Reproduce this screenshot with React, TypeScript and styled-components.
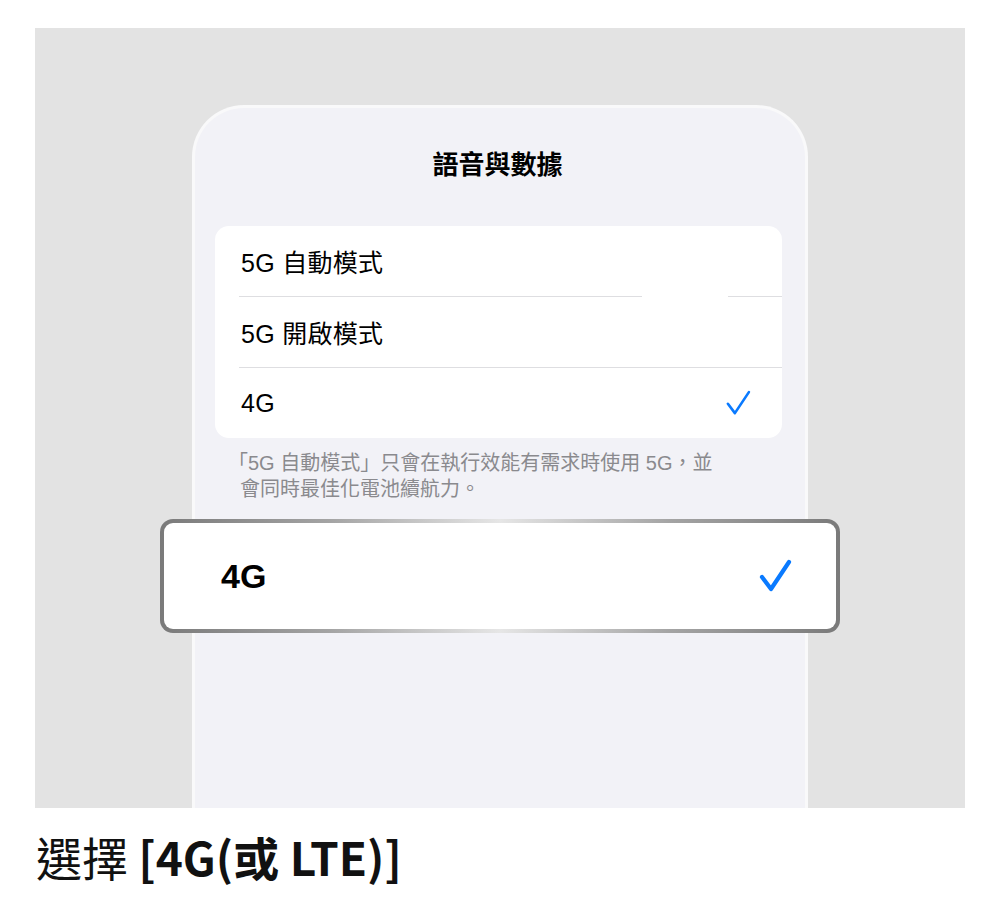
import React from "react";
import styled, { createGlobalStyle } from "styled-components";

const GlobalStyle = createGlobalStyle`
  html, body {
    margin: 0;
    padding: 0;
    background: #ffffff;
  }
  body {
    font-family: "Noto Sans CJK TC", "Noto Sans", sans-serif;
    -webkit-font-smoothing: antialiased;
  }
`;

const Page = styled.div`
  width: 1000px;
  height: 924px;
  background: #ffffff;
  display: flex;
  flex-direction: column;
`;

const Stage = styled.div`
  position: relative;
  margin: 28px 0 0 35px;
  width: 930px;
  height: 780px;
  background: #e3e3e3;
  display: flex;
  justify-content: center;
  padding-top: 77px;
  box-sizing: border-box;
  overflow: hidden;
`;

const Phone = styled.div`
  width: 616px;
  box-sizing: border-box;
  background: #f2f2f7;
  border: 3px solid #f9f9fa;
  border-bottom: none;
  border-radius: 52px 52px 0 0;
  display: flex;
  flex-direction: column;
  padding: 37px 23px 0 20px;
`;

const Title = styled.div`
  font-family: "Noto Sans CJK TC", sans-serif;
  font-weight: 700;
  font-size: 26px;
  line-height: 36px;
  color: #000000;
  text-align: center;
  margin-left: -2px;
`;

const Card = styled.div`
  margin-top: 45px;
  background: #ffffff;
  border-radius: 14px;
  display: flex;
  flex-direction: column;
  overflow: hidden;
`;

const Row = styled.div`
  height: 70px;
  display: flex;
  align-items: center;
  justify-content: space-between;
  padding: 0 30px 0 26px;
  font-family: "Liberation Sans", "Noto Sans CJK TC", sans-serif;
  font-size: 25px;
  color: #000000;
  letter-spacing: 0.3px;
`;

const Divider = styled.div<{ $gap?: boolean }>`
  height: 1px;
  margin-left: 24px;
  background: ${({ $gap }) =>
    $gap
      ? "linear-gradient(to right, #dedee1 0%, #dedee1 74.2%, transparent 74.2%, transparent 90%, #dedee1 90%)"
      : "#dedee1"};
`;

const Footnote = styled.p`
  margin: 12px 0 0 0;
  padding-left: 25px;
  font-family: "Liberation Sans", "Noto Sans CJK TC", sans-serif;
  font-size: 20px;
  line-height: 26px;
  color: #8a8a8e;
`;

/* opening bracket hangs at half width */
const Hang = styled.span`
  font-feature-settings: "halt";
  margin-left: -2px;
`;

const Highlight = styled.div`
  position: absolute;
  left: 125px;
  top: 491px;
  width: 680px;
  height: 114px;
  box-sizing: border-box;
  padding: 4px;
  border-radius: 13px;
  background: linear-gradient(
    to right,
    #7a7a7a 0%,
    #a4a4a4 25%,
    #e6e6e6 50%,
    #a4a4a4 75%,
    #7a7a7a 100%
  );
`;

const HighlightInner = styled.div`
  height: 100%;
  border-radius: 9px;
  background: #ffffff;
  display: flex;
  align-items: center;
  justify-content: space-between;
  padding: 0 43px 0 57px;
  box-sizing: border-box;
`;

const BigLabel = styled.span`
  font-family: "Liberation Sans", sans-serif;
  font-weight: 700;
  font-size: 34px;
  color: #000000;
`;

const Caption = styled.div`
  margin: 18px 0 0 36px;
  font-family: "Noto Sans CJK TC", sans-serif;
  font-size: 46px;
  line-height: 60px;
  color: #111111;
  font-weight: 400;
`;

const Strong = styled.span`
  font-weight: 700;
`;

const Check = ({ size, stroke }: { size: number; stroke: number }) => (
  <svg width={size} height={size} viewBox="0 0 36 36" fill="none">
    <polyline
      points="5,19 14,31 32,4"
      stroke="#0a7aff"
      strokeWidth={stroke}
      strokeLinecap="round"
      strokeLinejoin="round"
    />
  </svg>
);

export default function App() {
  return (
    <Page>
      <GlobalStyle />
      <Stage>
        <Phone>
          <Title>語音與數據</Title>
          <Card>
            <Row>5G 自動模式</Row>
            <Divider $gap />
            <Row>5G 開啟模式</Row>
            <Divider />
            <Row>
              4G
              <Check size={28} stroke={3.4} />
            </Row>
          </Card>
          <Footnote>
            <Hang>「</Hang>5G 自動模式」只會在執行效能有需求時使用 5G，並
            <br />
            會同時最佳化電池續航力。
          </Footnote>
        </Phone>
        <Highlight>
          <HighlightInner>
            <BigLabel>4G</BigLabel>
            <Check size={36} stroke={4.2} />
          </HighlightInner>
        </Highlight>
      </Stage>
      <Caption>
        選擇 <Strong>[4G(或 LTE)]</Strong>
      </Caption>
    </Page>
  );
}
